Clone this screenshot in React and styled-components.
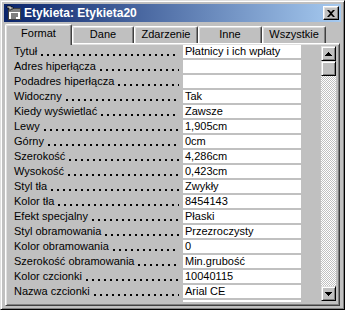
import React from 'react';
import styled, { createGlobalStyle } from 'styled-components';

const GlobalStyle = createGlobalStyle`
  body {
    margin: 0;
    background: #c0c0c0;
  }
`;

const rows = [
  ['Tytuł', 'Płatnicy i ich wpłaty'],
  ['Adres hiperłącza', ''],
  ['Podadres hiperłącza', ''],
  ['Widoczny', 'Tak'],
  ['Kiedy wyświetlać', 'Zawsze'],
  ['Lewy', '1,905cm'],
  ['Górny', '0cm'],
  ['Szerokość', '4,286cm'],
  ['Wysokość', '0,423cm'],
  ['Styl tła', 'Zwykły'],
  ['Kolor tła', '8454143'],
  ['Efekt specjalny', 'Płaski'],
  ['Styl obramowania', 'Przezroczysty'],
  ['Kolor obramowania', '0'],
  ['Szerokość obramowania', 'Min.grubość'],
  ['Kolor czcionki', '10040115'],
  ['Nazwa czcionki', 'Arial CE'],
  ['', ''],
];

const tabs = [
  { name: 'Format', width: 67, active: true },
  { name: 'Dane', width: 62 },
  { name: 'Zdarzenie', width: 64 },
  { name: 'Inne', width: 64 },
  { name: 'Wszystkie', width: 64 },
];

const Window = styled.div`
  width: 345px;
  height: 310px;
  box-sizing: border-box;
  padding: 3px;
  background: #c0c0c0;
  border: 1px solid;
  border-color: #dfdfdf #000 #000 #dfdfdf;
  box-shadow: inset 1px 1px #fff, inset -1px -1px #808080;
  font-family: "Liberation Sans", Arial, sans-serif;
  font-size: 11px;
  color: #000;
`;

const TitleBar = styled.div`
  height: 18px;
  display: flex;
  align-items: center;
  padding: 0 2px;
  background: linear-gradient(to right, #0a246a, #a6caf0);
  color: #fff;
  font-weight: bold;
  font-size: 12px;
  gap: 2px;
`;

const Title = styled.span`
  white-space: nowrap;
`;

const CloseButton = styled.div`
  margin-left: auto;
  width: 16px;
  height: 14px;
  box-sizing: border-box;
  background: #c0c0c0;
  border: 1px solid;
  border-color: #fff #000 #000 #fff;
  box-shadow: inset -1px -1px #808080, inset 1px 1px #dfdfdf;
  display: flex;
  align-items: center;
  justify-content: center;
`;

const TabStrip = styled.div`
  height: 19px;
  margin-top: 2px;
  padding-left: 1px;
  display: flex;
  align-items: flex-end;
`;

const Tab = styled.div`
  position: relative;
  z-index: ${(p) => (p.$active ? 1 : 0)};
  width: ${(p) => p.$width}px;
  height: ${(p) => (p.$active ? 21 : 17)}px;
  margin-bottom: ${(p) => (p.$active ? -2 : 0)}px;
  box-sizing: border-box;
  background: #c0c0c0;
  border: 1px solid;
  border-bottom: none;
  border-color: #fff #404040 #fff #fff;
  border-radius: 2px 2px 0 0;
  box-shadow: inset -1px 0 #808080, inset 1px 1px #dfdfdf;
  padding-top: ${(p) => (p.$active ? 2 : 1)}px;
  line-height: 13px;
  text-align: center;
  white-space: nowrap;
`;

const Panel = styled.div`
  margin: 0 1px;
  height: 263px;
  box-sizing: border-box;
  padding: 1px;
  border: 1px solid;
  border-color: #fff #404040 #404040 #fff;
  box-shadow: inset 1px 1px #dfdfdf, inset -1px -1px #808080;
  display: flex;
  align-items: flex-start;
`;

const Grid = styled.div`
  width: 294px;
  height: 257px;
  overflow: hidden;
  display: grid;
  grid-template-columns: 176px 118px;
  grid-auto-rows: 15px;
  align-content: start;
`;

const Label = styled.div`
  padding: 0 4px 0 7px;
  height: 13px;
  line-height: 13px;
  display: flex;
  align-items: baseline;
  white-space: nowrap;
  overflow: hidden;
`;

const Leader = styled.span`
  flex: 1;
  align-self: flex-end;
  height: 2px;
  margin: 0 0 2px 4px;
  background: radial-gradient(circle at 1px 1px, #000 0.7px, transparent 1.1px) 0 0 / 6px 2px repeat-x;
`;

const Value = styled.div`
  height: 13px;
  line-height: 13px;
  padding-left: 2px;
  background: #fff;
  white-space: nowrap;
  overflow: hidden;
`;

const ScrollBar = styled.div`
  width: 15px;
  height: 255px;
  margin: 1px 0 0 20px;
  display: flex;
  flex-direction: column;
`;

const ScrollButton = styled.div`
  width: 15px;
  height: 15px;
  flex: none;
  box-sizing: border-box;
  background: #c0c0c0;
  border: 1px solid;
  border-color: #dfdfdf #000 #000 #dfdfdf;
  box-shadow: inset 1px 1px #fff, inset -1px -1px #808080;
  display: flex;
  align-items: center;
  justify-content: center;
`;

const Track = styled.div`
  flex: 1;
  background: repeating-conic-gradient(#c0c0c0 0 25%, #fff 0 50%) 0 0 / 2px 2px;
`;

const Arrow = ({ down }) => (
  <svg width="7" height="4" viewBox="0 0 7 4" style={{ transform: down ? 'rotate(180deg)' : 'none' }}>
    <path d="M3 0h1v1h1v1h1v1h1v1H0V3h1V2h1V1h1z" fill="#000" />
  </svg>
);

const SheetIcon = () => (
  <svg width="16" height="16" viewBox="0 0 16 16">
    <rect x="2.5" y="3.5" width="12" height="11" fill="#fff" stroke="#404040" />
    <rect x="3" y="4" width="11" height="3" fill="#808080" />
    <path d="M5 9h7M5 11h7M5 13h5" stroke="#000" />
    <path d="M1 1h4v1h2v2H5v1H3V3H1z" fill="#c0c0c0" stroke="#000" strokeWidth="0.6" />
  </svg>
);

const CloseGlyph = () => (
  <svg width="8" height="7" viewBox="0 0 8 7">
    <path d="M0 0h2l2 2 2-2h2L5 3.5 8 7H6L4 5 2 7H0l3-3.5z" fill="#000" />
  </svg>
);

const App = () => (
  <>
    <GlobalStyle />
    <Window>
      <TitleBar>
        <SheetIcon />
        <Title>Etykieta: Etykieta20</Title>
        <CloseButton>
          <CloseGlyph />
        </CloseButton>
      </TitleBar>
      <TabStrip>
        {tabs.map((t) => (
          <Tab key={t.name} $width={t.width} $active={t.active}>
            {t.name}
          </Tab>
        ))}
      </TabStrip>
      <Panel>
        <Grid>
          {rows.map(([label, value], i) => (
            <React.Fragment key={i}>
              <Label>
                {label}
                <Leader />
              </Label>
              <Value>{value}</Value>
            </React.Fragment>
          ))}
        </Grid>
        <ScrollBar>
          <ScrollButton>
            <Arrow />
          </ScrollButton>
          <ScrollButton />
          <Track />
          <ScrollButton>
            <Arrow down />
          </ScrollButton>
        </ScrollBar>
      </Panel>
    </Window>
  </>
);

export default App;
